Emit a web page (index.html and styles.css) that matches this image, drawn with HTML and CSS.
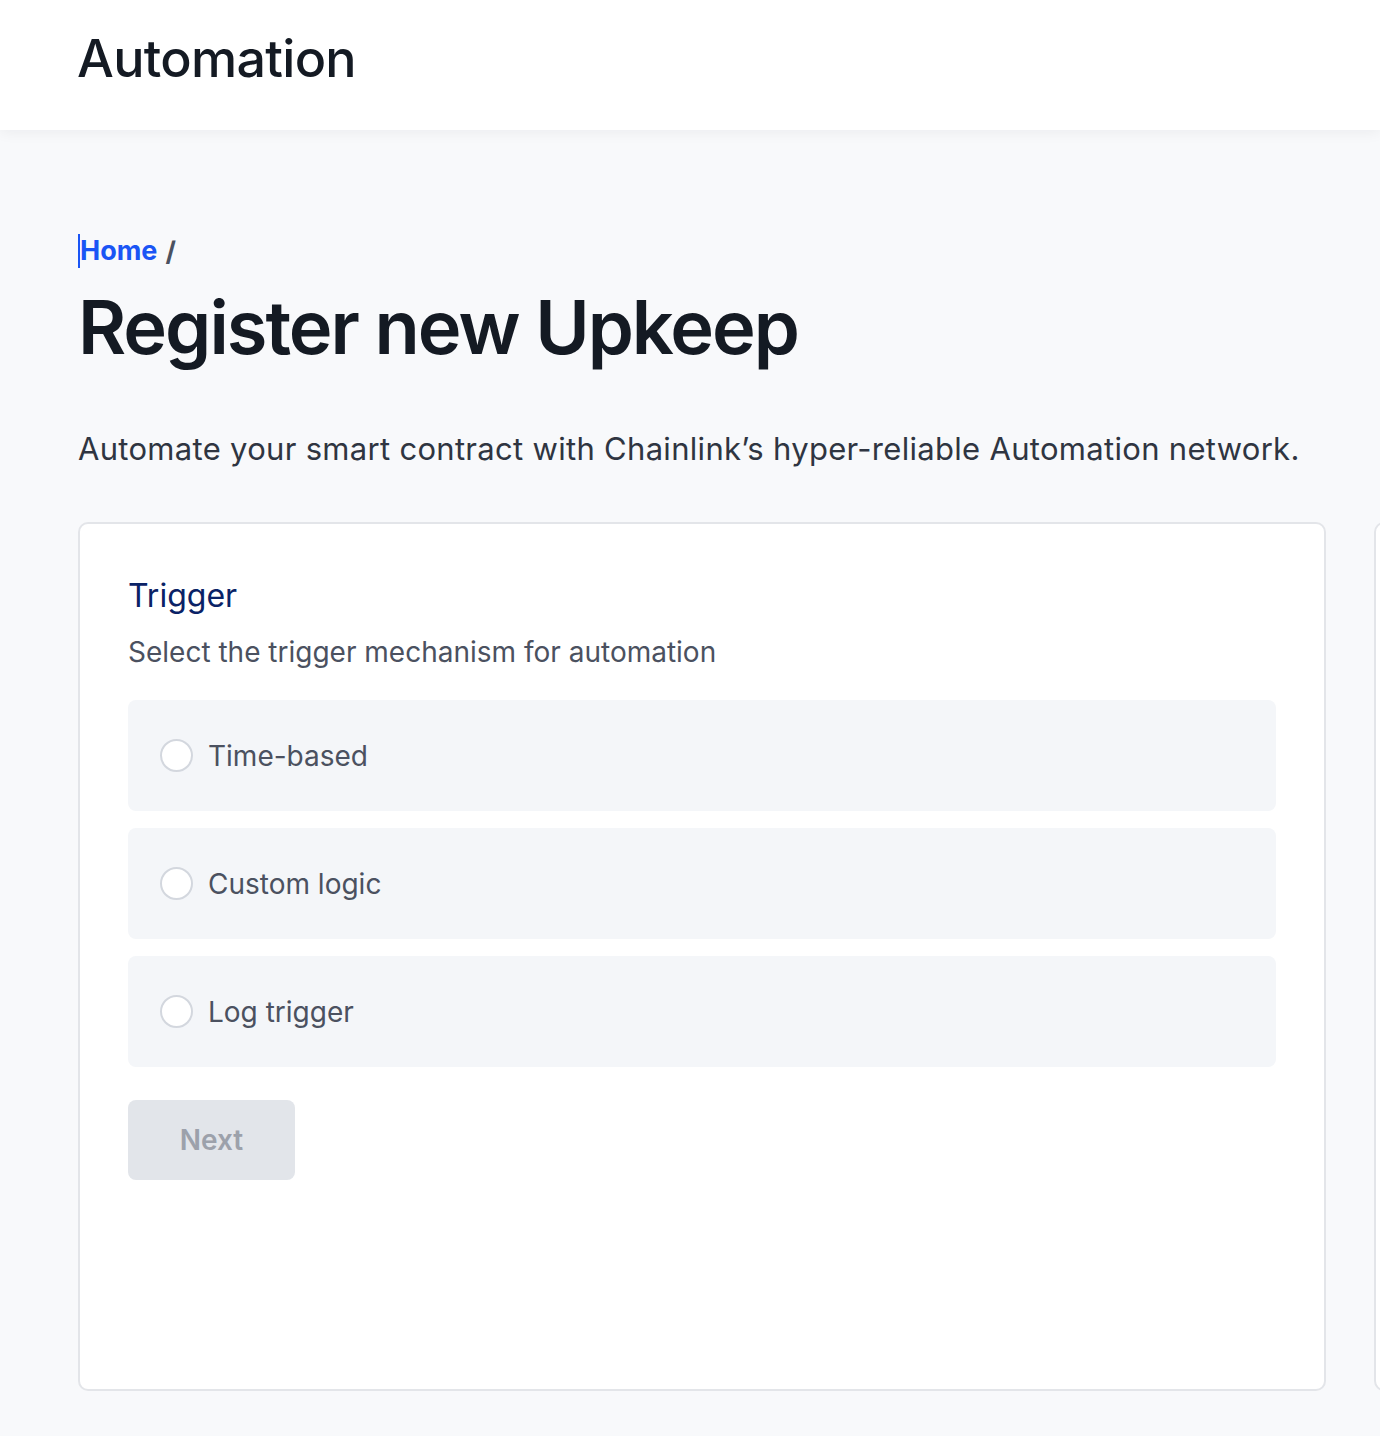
FILE: index.html
```html
<!DOCTYPE html>
<html lang="en">
<head>
<meta charset="utf-8">
<title>Register new Upkeep</title>
<link rel="stylesheet" href="styles.css">
</head>
<body>
<header class="topbar">
  <div class="brand">Automation</div>
</header>
<main class="page">
  <nav class="crumbs"><a class="crumb-link" href="#">Home</a><span class="crumb-sep">/</span></nav>
  <h1 class="title">Register new Upkeep</h1>
  <p class="lead">Automate your smart contract with Chainlink’s hyper-reliable Automation network.</p>
  <div class="columns">
    <section class="card">
      <h2 class="card-title">Trigger</h2>
      <p class="card-sub">Select the trigger mechanism for automation</p>
      <div class="options">
        <label class="option"><span class="radio"></span><span class="option-label">Time-based</span></label>
        <label class="option"><span class="radio"></span><span class="option-label">Custom logic</span></label>
        <label class="option"><span class="radio"></span><span class="option-label">Log trigger</span></label>
      </div>
      <button class="next" disabled>Next</button>
    </section>
    <aside class="card side"></aside>
  </div>
</main>
</body>
</html>
```
FILE: styles.css
```css
* { box-sizing: border-box; }
html, body { margin: 0; padding: 0; }
body {
  font-family: Inter, "Noto Sans", sans-serif;
  background: #f8f9fb;
  color: #141a23;
  overflow: hidden;
  height: 1436px;
  width: 1380px;
}
.topbar {
  height: 130px;
  background: #fff;
  display: flex;
  align-items: center;
  padding-left: 77px;
  box-shadow: 0 2px 14px rgba(17, 24, 39, 0.06);
  position: relative;
}
.brand {
  font-size: 52px;
  font-weight: 500;
  letter-spacing: -0.7px;
  color: #141a23;
  margin-top: -14px;
}
.page {
  padding: 98px 0 0 78px;
}
.crumbs {
  font-size: 27px;
  font-weight: 700;
  display: flex;
  gap: 8px;
  height: 44px;
  align-items: center;
  margin-top: 1px;
}
.crumb-link {
  color: #1a55f5;
  text-decoration: none;
  border-left: 2px solid #1a55f5;
  line-height: 34px;
}
.crumb-sep { color: #4b5160; }
.title {
  margin: 14px 0 0;
  font-size: 74px;
  font-weight: 600;
  letter-spacing: -2px;
  line-height: 80px;
  color: #141a23;
}
.lead {
  margin: 62px 0 0;
  font-size: 31px;
  letter-spacing: 0.3px;
  line-height: 40px;
  color: #2f3541;
}
.columns {
  display: flex;
  gap: 48px;
  margin-top: 53px;
  overflow: hidden;
}
.card {
  flex: 0 0 1248px;
  height: 869px;
  background: #fff;
  border: 2px solid #e3e5e9;
  border-radius: 10px;
  padding: 52px 48px 0;
}
.card.side { flex: 0 0 600px; }
.card-title {
  margin: 0;
  font-size: 32px;
  font-weight: 400;
  line-height: 40px;
  color: #0a2266;
}
.card-sub {
  margin: 18px 0 0;
  font-size: 28px;
  line-height: 36px;
  color: #4b5160;
}
.options {
  margin-top: 30px;
  display: flex;
  flex-direction: column;
  gap: 17px;
}
.option {
  height: 111px;
  background: #f4f6f9;
  border-radius: 8px;
  display: flex;
  align-items: center;
  padding-left: 32px;
  gap: 15px;
}
.radio {
  width: 33px;
  height: 33px;
  border-radius: 50%;
  background: #fff;
  border: 2px solid #d3d7de;
}
.option-label {
  font-size: 28px;
  color: #4b5160;
}
.next {
  margin-top: 33px;
  width: 167px;
  height: 80px;
  border: 0;
  border-radius: 8px;
  background: #e2e5ea;
  color: #9ca1ab;
  font-family: inherit;
  font-size: 28px;
  font-weight: 600;
}
```
